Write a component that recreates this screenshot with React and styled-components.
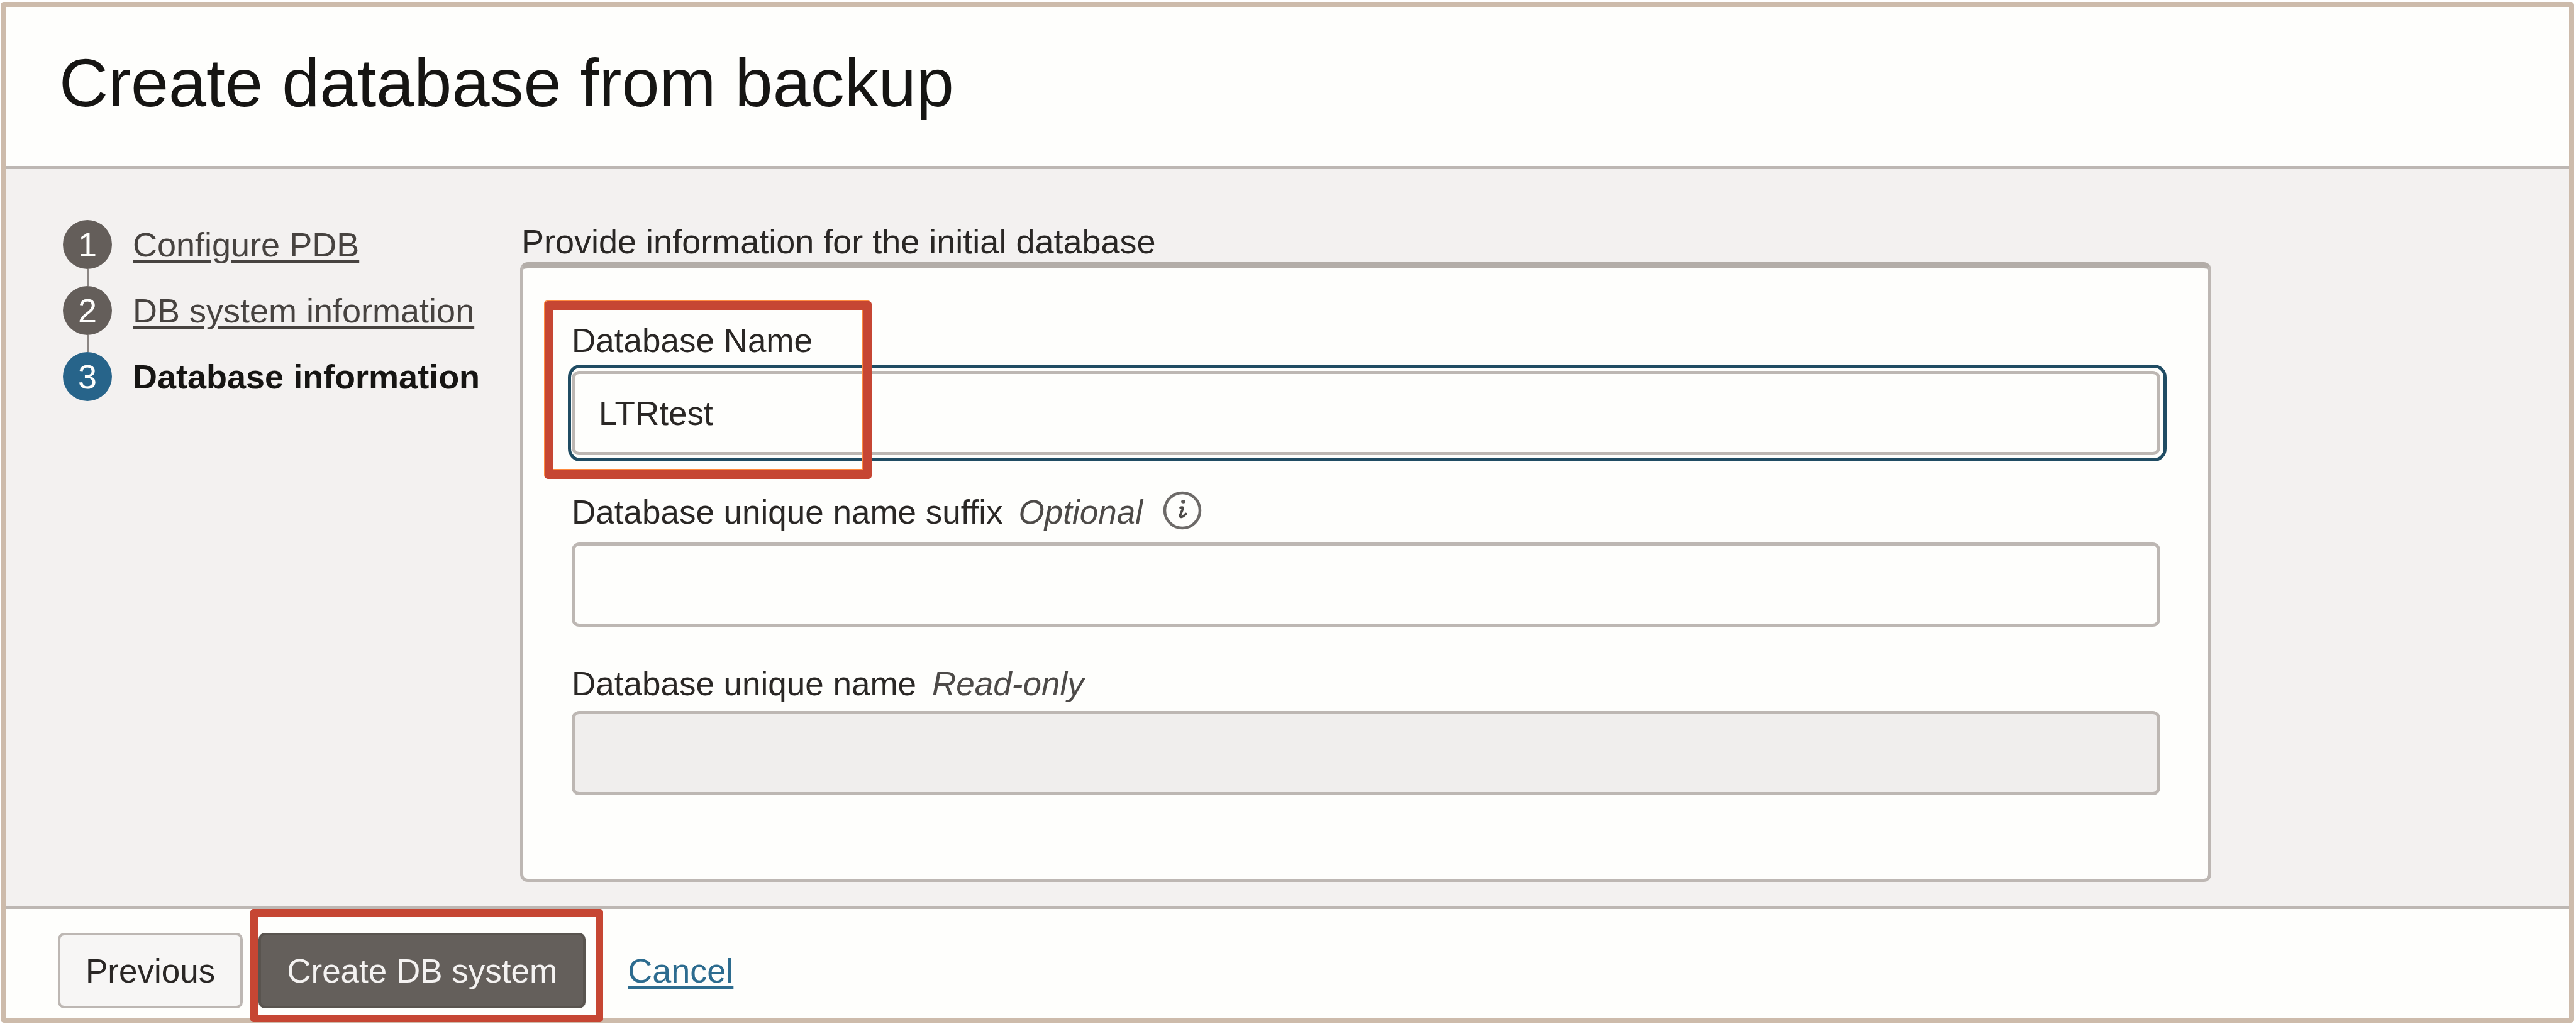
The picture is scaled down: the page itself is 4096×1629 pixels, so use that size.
import * as React from 'react';
import styled, { createGlobalStyle } from 'styled-components';

const GlobalStyle = createGlobalStyle`
    * {
        box-sizing: border-box;
    }

    body {
        margin: 0;
        background: #ffffff;
        color: #2a2725;
        font-family: "Liberation Sans", Arial, sans-serif;
        font-size: 54px;
        line-height: 62px;
    }
`;

const Page = styled.div`
    display: flex;
    min-height: 100vh;
    padding: 3px 3px 2px 1px;
`;

const Frame = styled.div`
    display: flex;
    flex: 1;
    flex-direction: column;
    border: 8px solid #cdbbab;
    border-radius: 5px;
    background: #fefefc;
`;

const Header = styled.header`
    padding: 59px 85px 70px;
    border-bottom: 5px solid #bdb7b3;
`;

const Title = styled.h1`
    margin: 0;
    color: #161513;
    font-size: 108px;
    font-weight: 400;
    line-height: 124px;
`;

const Content = styled.div`
    display: flex;
    flex: 1;
    align-items: flex-start;
    padding: 81px 569px 38px 91px;
    background: #f3f1f0;
`;

const StepList = styled.ol`
    display: flex;
    flex: 0 0 727px;
    flex-direction: column;
    margin: 0;
    padding: 0;
    list-style: none;
`;

const Step = styled.li`
    display: flex;
    align-items: center;
    gap: 33px;
`;

const StepNumber = styled.span`
    display: flex;
    align-items: center;
    justify-content: center;
    width: 78px;
    height: 78px;
    border-radius: 50%;
    background: ${props => props.$active ? '#27648a' : '#645e5a'};
    color: #fefefc;
`;

const StepLine = styled.li`
    width: 4px;
    height: 27px;
    margin-left: 38px;
    background: #8b8683;
`;

const StepLink = styled.a`
    color: #474340;
    text-decoration: underline;
    text-decoration-thickness: 5px;
    text-underline-offset: 6px;
`;

const StepCurrent = styled.span`
    color: #161513;
    font-weight: 700;
`;

const Main = styled.main`
    display: flex;
    flex: 1;
    flex-direction: column;
    gap: 2px;
    padding-top: 3px;
`;

const SectionTitle = styled.h2`
    margin: 0;
    padding-left: 2px;
    font-size: 54px;
    font-weight: 400;
`;

const Panel = styled.section`
    display: flex;
    flex-direction: column;
    gap: 60px;
    padding: 84px 76px 133px 77px;
    border: 5px solid #bdb7b3;
    border-top: 10px solid #b3ada8;
    border-radius: 12px;
    background: #fefefc;
`;

const Field = styled.div`
    position: relative;
    display: flex;
    flex-direction: column;
    gap: ${props => props.$tight ? 12 : 17}px;
`;

const LabelRow = styled.div`
    display: flex;
    align-items: center;
    font-size: 53px;
`;

const Hint = styled.em`
    margin-left: 25px;
    color: #4d4a48;
`;

const InfoButton = styled.button`
    display: flex;
    align-items: center;
    height: 56px;
    margin: 0 0 6px 32px;
    padding: 0;
    border: none;
    background: transparent;
`;

const Input = styled.input`
    width: 100%;
    height: 134px;
    padding: 0 38px;
    border: 5px solid #bdb7b3;
    border-radius: 12px;
    outline: none;
    background: #fefefc;
    color: #2a2725;
    font-family: inherit;
    font-size: 53px;

    &:read-only {
        background: #f0eeed;
    }
`;

const FocusRing = styled.div`
    display: flex;
    margin: -10px -10px -10px -6px;
    padding: 5px 5px 5px 1px;
    border: 5px solid #204c63;
    border-radius: 20px;
`;

// red marker drawn over a part of the form
const Marker = styled.span`
    position: absolute;
    border: ${props => props.$thickness}px solid #c64633;
    border-radius: 5px;
    pointer-events: none;
`;

const NameMarker = styled(Marker)`
    top: -32px;
    left: -43px;
    width: 520px;
    height: 283px;
    box-shadow: -1px -1px 0 #ff8a3d, inset -2px -2px 0 #ff8a3d;
`;

const SubmitMarker = styled(Marker)`
    inset: -38px -28px -22px -13px;
`;

const Footer = styled.footer`
    display: flex;
    align-items: center;
    gap: 25px;
    padding: 38px 83px 15px;
    border-top: 5px solid #bdb7b3;
`;

const Button = styled.button`
    height: 120px;
    padding: 0 ${props => props.$primary ? 41 : 40}px;
    border: 4px solid ${props => props.$primary ? '#59544f' : '#bdb7b3'};
    border-radius: 10px;
    background: ${props => props.$primary ? '#645f5b' : '#f7f6f5'};
    color: ${props => props.$primary ? '#f4f2f1' : '#2a2725'};
    font-family: inherit;
    font-size: 53px;
`;

const SubmitWrap = styled.div`
    position: relative;
    display: flex;
`;

const CancelLink = styled.a`
    margin-left: 42px;
    color: #2d6c8f;
    text-decoration: underline;
    text-decoration-thickness: 5px;
    text-underline-offset: 5px;
`;

function InfoIcon()
{
    return(
        <svg width="62" height="62" viewBox="0 0 62 62" fill="none" aria-hidden="true">
            <circle cx="31" cy="31" r="28" stroke="#6d6a68" strokeWidth="4.5" />
            <ellipse cx="32.5" cy="17" rx="3.4" ry="2.8" fill="#5b5856" />
            <path d="M28 26.5 C31 25.5 32.5 26 31.8 28.5 L27.6 38.5 C26.6 42.5 30.5 43 36.5 36.5" stroke="#4b4846" strokeWidth="3.8" strokeLinecap="round" strokeLinejoin="round" />
        </svg>
    );
}

export default function App()
{
    const [name, setName] = React.useState("LTRtest");
    const [suffix, setSuffix] = React.useState("");

    return(
        <Page>
            <GlobalStyle />
            <Frame>
                <Header>
                    <Title>Create database from backup</Title>
                </Header>

                <Content>
                    <StepList>
                        <Step>
                            <StepNumber>1</StepNumber>
                            <StepLink href="#pdb">Configure PDB</StepLink>
                        </Step>
                        <StepLine aria-hidden="true" />
                        <Step>
                            <StepNumber>2</StepNumber>
                            <StepLink href="#system">DB system information</StepLink>
                        </Step>
                        <StepLine aria-hidden="true" />
                        <Step aria-current="step">
                            <StepNumber $active>3</StepNumber>
                            <StepCurrent>Database information</StepCurrent>
                        </Step>
                    </StepList>

                    <Main>
                        <SectionTitle>Provide information for the initial database</SectionTitle>
                        <Panel>
                            <Field>
                                <LabelRow>
                                    <label htmlFor="dbName">Database Name</label>
                                </LabelRow>
                                <FocusRing>
                                    <Input id="dbName" type="text" value={name} onChange={(e) => setName(e.target.value)} />
                                </FocusRing>
                                <NameMarker $thickness={14} />
                            </Field>

                            <Field>
                                <LabelRow>
                                    <label htmlFor="dbSuffix">Database unique name suffix</label>
                                    <Hint>Optional</Hint>
                                    <InfoButton type="button" aria-label="More information">
                                        <InfoIcon />
                                    </InfoButton>
                                </LabelRow>
                                <Input id="dbSuffix" type="text" value={suffix} onChange={(e) => setSuffix(e.target.value)} />
                            </Field>

                            <Field $tight>
                                <LabelRow>
                                    <label htmlFor="dbUnique">Database unique name</label>
                                    <Hint>Read-only</Hint>
                                </LabelRow>
                                <Input id="dbUnique" type="text" value="" readOnly />
                            </Field>
                        </Panel>
                    </Main>
                </Content>

                <Footer>
                    <Button type="button">Previous</Button>
                    <SubmitWrap>
                        <Button type="button" $primary>Create DB system</Button>
                        <SubmitMarker $thickness={12} />
                    </SubmitWrap>
                    <CancelLink href="#cancel">Cancel</CancelLink>
                </Footer>
            </Frame>
        </Page>
    );
}
